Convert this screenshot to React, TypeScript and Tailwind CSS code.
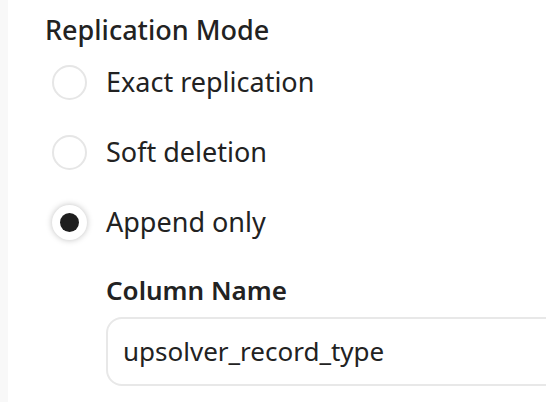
export default function App() {
  const options = [
    { label: 'Exact replication', checked: false },
    { label: 'Soft deletion', checked: false },
    { label: 'Append only', checked: true },
  ];

  return (
    <div className="flex min-h-[402px] w-[546px] overflow-hidden bg-white font-['Noto_Sans',sans-serif] text-[#222]">
      <div className="w-2 shrink-0 bg-[#f8f8f8]" />
      <div className="flex-1 pl-[37px] pt-[12px]">
        <h2 className="text-[27px] leading-[36px] font-medium">Replication Mode</h2>
        <div className="mt-[16px] flex flex-col gap-[34px]">
          {options.map((o) => (
            <label key={o.label} className="flex items-center gap-[19px] pl-[7px]">
              <span
                className={
                  o.checked
                    ? 'flex h-[35px] w-[35px] items-center justify-center rounded-full bg-white shadow-[0_0_6px_rgba(0,0,0,0.25)]'
                    : 'flex h-[35px] w-[35px] items-center justify-center rounded-full border-2 border-[#e6e6e6] bg-white'
                }
              >
                {o.checked && <span className="h-[19px] w-[19px] rounded-full bg-[#1e1e1e]" />}
              </span>
              <span className="text-[27px] leading-[36px]">{o.label}</span>
            </label>
          ))}
        </div>
        <div className="ml-[61px] mt-[32px]">
          <div className="text-[26px] leading-[36px] font-semibold">Column Name</div>
          <div className="mt-[9px] -mr-4 flex h-[69px] items-center rounded-[16px] border-2 border-[#e8e8e8] pl-[15px] text-[26px]">
            upsolver_record_type
          </div>
        </div>
      </div>
    </div>
  );
}
